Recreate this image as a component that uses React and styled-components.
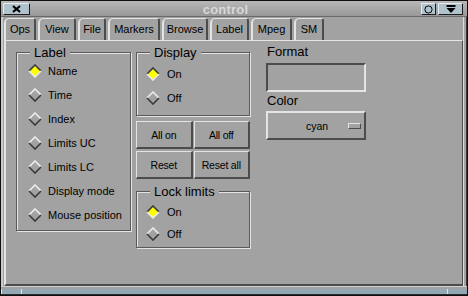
import React from 'react';
import styled, { createGlobalStyle } from 'styled-components';

const BG = '#a2a2a2';
const LIGHT = '#e4e4e4';
const DARK = '#4c4c4c';

const Global = createGlobalStyle`
  html, body { margin: 0; padding: 0; background: ${BG}; }
  body { font-family: "Liberation Sans", Arial, sans-serif; }
`;

const Window = styled.div`
  width: 468px;
  height: 296px;
  box-sizing: border-box;
  border: 1px solid #101010;
  background: ${BG};
  display: flex;
  flex-direction: column;
  overflow: hidden;
  font-family: "Liberation Sans", Arial, sans-serif;
  color: #000;
`;

const TitleBar = styled.div`
  height: 16px;
  box-sizing: border-box;
  display: flex;
  align-items: flex-start;
  gap: 2px;
  padding: 2px 4px 0 2px;
  background: linear-gradient(#b8b8b8, #989898);
  border-bottom: 1px solid #6a6a6a;
`;

const WinButton = styled.div`
  width: ${p => p.$w}px;
  height: 12px;
  box-sizing: border-box;
  background: #b0c3cd;
  border: 1px solid;
  border-color: #e4ecf0 #1c1c1c #1c1c1c #e4ecf0;
  display: flex;
  align-items: center;
  justify-content: center;
`;

const Title = styled.div`
  flex: 1;
  text-align: center;
  font-weight: bold;
  font-size: 13px;
  line-height: 13px;
  color: #d8d8d8;
  letter-spacing: 0.2px;
`;

const Body = styled.div`
  flex: 1;
  display: flex;
  flex-direction: column;
  padding: 0 4px 0 3px;
  box-shadow: inset -1px 0 0 #3a3a3a, inset -3px 0 0 ${BG}, inset -4px 0 0 #dcdcdc,
    inset 2px 0 0 #c4ccd0;
`;

const TabRow = styled.div`
  height: 23px;
  box-sizing: border-box;
  padding-top: 1px;
  display: flex;
  align-items: flex-end;
  gap: 2px;
`;

const Tab = styled.div`
  width: ${p => p.$w}px;
  height: 22px;
  box-sizing: border-box;
  border-top: 1px solid ${LIGHT};
  border-left: 2px solid ${LIGHT};
  border-right: 2px solid ${DARK};
  border-radius: 5px 3px 0 0;
  font-size: 11px;
  display: flex;
  align-items: center;
  justify-content: center;
  padding-bottom: 1px;
`;

const Panel = styled.div`
  flex: 1;
  box-sizing: border-box;
  border-style: solid;
  border-width: 1px 1px 2px 2px;
  border-color: ${LIGHT} ${DARK} ${DARK} ${LIGHT};
  padding: 4px 0 0 10px;
  display: flex;
  align-items: flex-start;
  gap: 5px;
`;

const Column = styled.div`
  width: ${p => p.$w}px;
  margin-left: ${p => p.$ml || 0}px;
  display: flex;
  flex-direction: column;
`;

const Frame = styled.div`
  position: relative;
  margin-top: ${p => p.$mt}px;
  border: 1px solid #5a5a5a;
  box-shadow: 1px 1px 0 ${LIGHT}, inset 1px 1px 0 ${LIGHT};
  padding: ${p => p.$pt}px 0 ${p => p.$pb}px ${p => p.$pl}px;
  display: flex;
  flex-direction: column;
`;

const Legend = styled.span`
  position: absolute;
  top: -8px;
  left: 13px;
  padding: 0 4px;
  background: ${BG};
  font-size: 13px;
  line-height: 15px;
`;

const RadioRow = styled.div`
  height: ${p => p.$h}px;
  display: flex;
  align-items: center;
  gap: ${p => p.$gap}px;
  font-size: 11px;
`;

const ButtonGrid = styled.div`
  margin-top: 5px;
  display: grid;
  grid-template-columns: 1fr 1fr;
  column-gap: 1px;
  row-gap: 2px;
`;

const PushButton = styled.div`
  height: 28px;
  box-sizing: border-box;
  border-style: solid;
  border-width: 1px 2px 2px 1px;
  border-color: ${LIGHT} ${DARK} ${DARK} ${LIGHT};
  display: flex;
  align-items: center;
  justify-content: center;
  font-size: 10.5px;
  letter-spacing: -0.2px;
`;

const FieldLabel = styled.div`
  font-size: 13px;
  line-height: 14px;
  padding-left: 1px;
  margin-top: ${p => p.$mt || 0}px;
`;

const TextBox = styled.div`
  margin-top: 4px;
  height: 29px;
  box-sizing: border-box;
  border-style: solid;
  border-width: 2px;
  border-color: ${DARK} ${LIGHT} ${LIGHT} ${DARK};
`;

const OptionMenu = styled.div`
  margin-top: 3px;
  height: 29px;
  box-sizing: border-box;
  border-style: solid;
  border-width: 2px;
  border-color: ${LIGHT} ${DARK} ${DARK} ${LIGHT};
  display: flex;
  align-items: center;
  padding: 0 3px 0 8px;
  font-size: 10.5px;
`;

const OptionText = styled.span`
  flex: 1;
  text-align: center;
  padding-left: 10px;
`;

const OptionIndicator = styled.span`
  width: 13px;
  height: 6px;
  box-sizing: border-box;
  border-style: solid;
  border-width: 1px;
  border-color: ${LIGHT} ${DARK} ${DARK} ${LIGHT};
`;

const BottomFrame = styled.div`
  height: 9px;
  box-sizing: border-box;
  border-top: 1px solid #cfcfcf;
  padding-top: 2px;
  border-bottom: 1px solid #2a2a2a;
  display: flex;
  background: ${BG};
`;

const FrameSeg = styled.div`
  height: 5px;
  background: #93a8b3;
  border-left: 1px solid #dfe6ea;
  width: ${p => (p.$w ? `${p.$w}px` : 'auto')};
  flex: ${p => (p.$w ? 'none' : 1)};
`;

const Diamond = ({ on }) => (
  <svg width="14" height="14" viewBox="0 0 14 14">
    <polygon points="7,1 13,7 7,13 1,7" fill={on ? '#ffff00' : BG} />
    <path d="M1 7 L7 1 L13 7" fill="none" stroke={on ? '#3a3a3a' : '#ececec'} strokeWidth="1.6" />
    <path d="M1 7 L7 13 L13 7" fill="none" stroke={on ? '#e8e8e8' : '#3a3a3a'} strokeWidth="1.6" />
  </svg>
);

const Radio = ({ label, on, h, gap }) => (
  <RadioRow $h={h} $gap={gap}>
    <Diamond on={on} />
    <span>{label}</span>
  </RadioRow>
);

const tabs = [
  ['Ops', 32], ['View', 38], ['File', 28], ['Markers', 52],
  ['Browse', 46], ['Label', 39], ['Mpeg', 41], ['SM', 30],
];

const labelItems = ['Name', 'Time', 'Index', 'Limits UC', 'Limits LC', 'Display mode', 'Mouse position'];

export default function App() {
  return (
    <>
      <Global />
      <Window>
        <TitleBar>
          <WinButton $w={27}>
            <svg width="9" height="8" viewBox="0 0 9 8">
              <path d="M1 1 L8 7 M8 1 L1 7" stroke="#000" strokeWidth="2.2" />
            </svg>
          </WinButton>
          <Title>control</Title>
          <WinButton $w={15}>
            <svg width="9" height="9" viewBox="0 0 9 9">
              <circle cx="4.5" cy="4.5" r="3.6" fill="none" stroke="#000" strokeWidth="1" />
            </svg>
          </WinButton>
          <WinButton $w={25}>
            <svg width="10" height="8" viewBox="0 0 10 8">
              <rect x="0.5" y="0" width="9" height="2" fill="#000" />
              <path d="M0.5 3 L9.5 3 L5 8 Z" fill="#000" />
            </svg>
          </WinButton>
        </TitleBar>
        <Body>
          <TabRow>
            {tabs.map(([t, w]) => (
              <Tab key={t} $w={w}>{t}</Tab>
            ))}
          </TabRow>
          <Panel>
            <Column $w={115}>
              <Frame $mt={7} $pt={6} $pb={3} $pl={11}>
                <Legend>Label</Legend>
                {labelItems.map((l, i) => (
                  <Radio key={l} label={l} on={i === 0} h={24} gap={6} />
                ))}
              </Frame>
            </Column>
            <Column $w={114}>
              <Frame $mt={7} $pt={9} $pb={5} $pl={9}>
                <Legend>Display</Legend>
                <Radio label="On" on h={24} gap={7} />
                <Radio label="Off" h={24} gap={7} />
              </Frame>
              <ButtonGrid>
                <PushButton>All on</PushButton>
                <PushButton>All off</PushButton>
                <PushButton>Reset</PushButton>
                <PushButton>Reset all</PushButton>
              </ButtonGrid>
              <Frame $mt={12} $pt={9} $pb={2} $pl={9}>
                <Legend>Lock limits</Legend>
                <Radio label="On" on h={22} gap={7} />
                <Radio label="Off" h={22} gap={7} />
              </Frame>
            </Column>
            <Column $w={100} $ml={11}>
              <FieldLabel>Format</FieldLabel>
              <TextBox />
              <FieldLabel $mt={2}>Color</FieldLabel>
              <OptionMenu>
                <OptionText>cyan</OptionText>
                <OptionIndicator />
              </OptionMenu>
            </Column>
          </Panel>
        </Body>
        <BottomFrame>
          <FrameSeg $w={19} />
          <FrameSeg />
          <FrameSeg $w={19} />
        </BottomFrame>
      </Window>
    </>
  );
}
